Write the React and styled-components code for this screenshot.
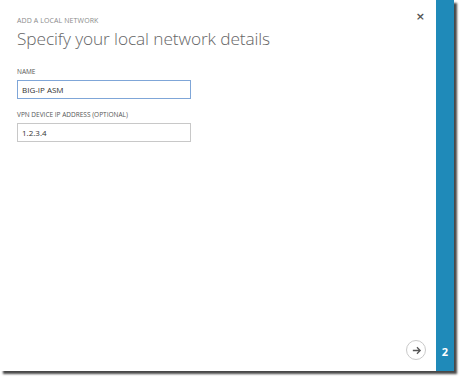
import React from "react";
import styled, { createGlobalStyle } from "styled-components";

const Global = createGlobalStyle`
  html, body { margin: 0; padding: 0; background: #fff; }
  body { width: 460px; height: 378px; overflow: hidden; }
  * { box-sizing: border-box; }
`;

const Frame = styled.div`
  width: 454px;
  height: 371px;
  display: flex;
  background: #fff;
  box-shadow: 3px 3px 2px rgba(40, 40, 40, 0.85);
  font-family: "Open Sans", "Liberation Sans", sans-serif;
`;

const Dialog = styled.div`
  flex: 1;
  display: flex;
  flex-direction: column;
  padding: 15px 10px 10px 17px;
`;

const Header = styled.div`
  display: flex;
  justify-content: space-between;
  align-items: flex-start;
`;

const Eyebrow = styled.div`
  font-size: 7px;
  color: #8a8a8a;
  text-transform: uppercase;
  letter-spacing: 0.1px;
  margin-top: 1px;
`;

const Close = styled.button`
  border: 0;
  background: none;
  padding: 0;
  margin: -4px 1px 0 0;
  font-family: "DejaVu Sans", sans-serif;
  font-size: 11px;
  line-height: 1;
  color: #555;
  font-weight: 700;
  cursor: pointer;
`;

const Title = styled.h1`
  margin: 2px 0 0 0;
  font-size: 17.3px;
  font-weight: 300;
  color: #666;
  letter-spacing: -0.1px;
`;

const Form = styled.div`
  display: flex;
  flex-direction: column;
  gap: 11px;
  margin-top: 17px;
  width: 174px;
`;

const Field = styled.label`
  display: flex;
  flex-direction: column;
  gap: 4px;
`;

const Label = styled.span`
  font-size: 6.5px;
  color: #555;
  text-transform: uppercase;
`;

const Input = styled.input`
  height: 19px;
  width: 174px;
  padding: 0 4px;
  font-family: "Open Sans", "Liberation Sans", sans-serif;
  font-size: 8px;
  color: #333;
  border: 1px solid ${(p) => (p.$focused ? "#7fa6d8" : "#c8c8c8")};
  outline: none;
  background: #fff;
`;

const Footer = styled.div`
  margin-top: auto;
  display: flex;
  justify-content: flex-end;
`;

const NextButton = styled.div`
  width: 20px;
  height: 20px;
  border-radius: 50%;
  border: 1.5px solid #c9c9c9;
  display: flex;
  align-items: center;
  justify-content: center;
  margin-bottom: 1px;
`;

const Rail = styled.div`
  width: 18px;
  background: #1f8ab9;
  display: flex;
  flex-direction: column;
  justify-content: flex-end;
  align-items: center;
  padding-bottom: 12px;
  color: #fff;
  font-weight: 700;
  font-size: 11px;
`;

export default function App() {
  return (
    <>
      <Global />
      <Frame>
        <Dialog>
          <Header>
            <Eyebrow>Add a local network</Eyebrow>
            <Close aria-label="close">×</Close>
          </Header>
          <Title>Specify your local network details</Title>
          <Form>
            <Field>
              <Label>Name</Label>
              <Input $focused defaultValue="BIG-IP ASM" />
            </Field>
            <Field>
              <Label>VPN Device IP Address (Optional)</Label>
              <Input defaultValue="1.2.3.4" />
            </Field>
          </Form>
          <Footer>
            <NextButton>
              <svg width="11" height="11" viewBox="0 0 12 12" fill="none" stroke="#555" strokeWidth="1.4">
                <path d="M2 6h8M6.5 2.5L10 6l-3.5 3.5" />
              </svg>
            </NextButton>
          </Footer>
        </Dialog>
        <Rail>2</Rail>
      </Frame>
    </>
  );
}
